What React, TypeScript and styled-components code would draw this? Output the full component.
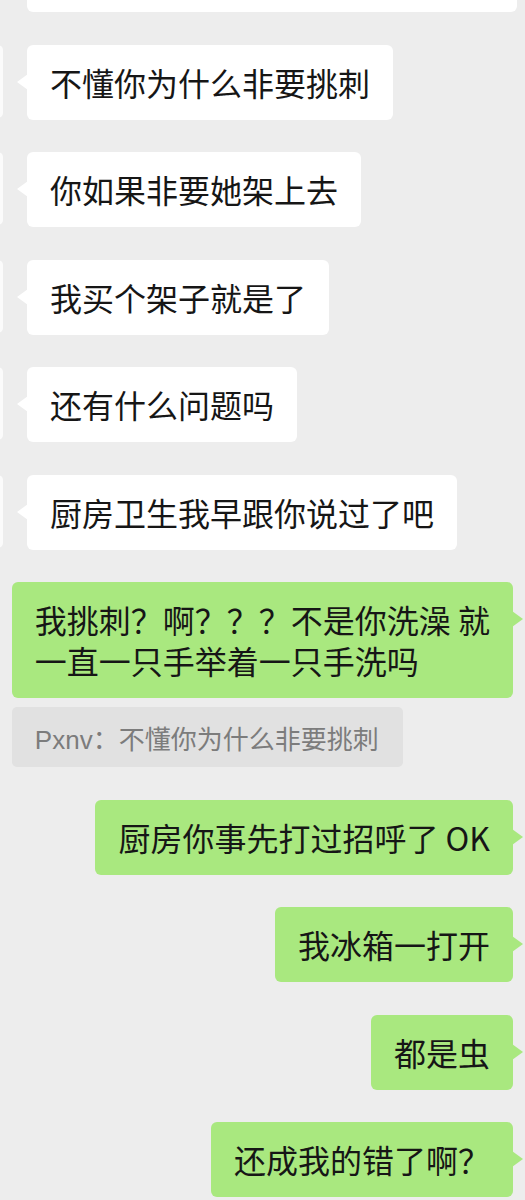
import React from "react";
import styled, { createGlobalStyle, css } from "styled-components";

const GlobalStyle = createGlobalStyle`
  html, body {
    margin: 0;
    padding: 0;
    background: #ededed;
    overflow: hidden;
  }
  body {
    font-family: "Liberation Sans", "Noto Sans CJK SC", sans-serif;
  }
`;

const Viewport = styled.div`
  width: 525px;
  height: 1200px;
  overflow: hidden;
`;

const Chat = styled.div`
  display: flex;
  flex-direction: column;
  gap: 32.5px;
  margin-top: -105px;
`;

const Row = styled.div<{ $side: "left" | "right" }>`
  display: flex;
  align-items: flex-start;
  ${(p) =>
    p.$side === "left"
      ? css`
          justify-content: flex-start;
          gap: 24px;
        `
      : css`
          justify-content: flex-end;
          padding-right: 12px;
        `}
`;

const Avatar = styled.div`
  flex: none;
  width: 60px;
  height: 73px;
  margin-left: -57px;
  border-radius: 5px;
  background: #fbfbfb;
`;

const Bubble = styled.div<{ $side: "left" | "right" }>`
  position: relative;
  box-sizing: border-box;
  padding: 17px 23px;
  border-radius: 6px;
  font-family: "Noto Sans CJK SC", sans-serif;
  font-size: 32px;
  line-height: 41px;
  color: #161616;
  max-width: ${(p) => (p.$side === "left" ? "490px" : "505px")};
  background: ${(p) => (p.$side === "left" ? "#ffffff" : "#a9e87f")};

  &::before {
    content: "";
    position: absolute;
    top: 29px;
    width: 0;
    height: 0;
    border-top: 8px solid transparent;
    border-bottom: 8px solid transparent;
    ${(p) =>
      p.$side === "left"
        ? css`
            left: -10px;
            border-right: 11px solid #ffffff;
          `
        : css`
            right: -10px;
            border-left: 11px solid #a9e87f;
          `}
  }
`;

const ClippedBubble = styled(Bubble)`
  width: 490px;
  height: 117px;
`;

const Group = styled.div`
  display: flex;
  flex-direction: column;
  align-items: flex-start;
  gap: 9px;
`;

const Quote = styled.div`
  box-sizing: border-box;
  height: 60px;
  display: flex;
  align-items: center;
  padding: 0 24px 0 23px;
  border-radius: 5px;
  background: #e1e1e1;
  color: #7c7c7c;
  font-size: 26px;
  white-space: nowrap;
`;

const leftMessages = [
  "不懂你为什么非要挑刺",
  "你如果非要她架上去",
  "我买个架子就是了",
  "还有什么问题吗",
  "厨房卫生我早跟你说过了吧",
];

const rightMessages = ["厨房你事先打过招呼了 OK", "我冰箱一打开", "都是虫", "还成我的错了啊？"];

export default function App() {
  return (
    <>
      <GlobalStyle />
      <Viewport>
        <Chat>
          <Row $side="left">
            <Avatar />
            <ClippedBubble $side="left" />
          </Row>
          {leftMessages.map((m) => (
            <Row $side="left" key={m}>
              <Avatar />
              <Bubble $side="left">{m}</Bubble>
            </Row>
          ))}
          <Row $side="right">
            <Group>
              <Bubble $side="right">
                我挑刺？啊？？？不是你洗澡 就
                <br />
                一直一只手举着一只手洗吗
              </Bubble>
              <Quote>Pxnv：不懂你为什么非要挑刺</Quote>
            </Group>
          </Row>
          {rightMessages.map((m) => (
            <Row $side="right" key={m}>
              <Bubble $side="right">{m}</Bubble>
            </Row>
          ))}
        </Chat>
      </Viewport>
    </>
  );
}
